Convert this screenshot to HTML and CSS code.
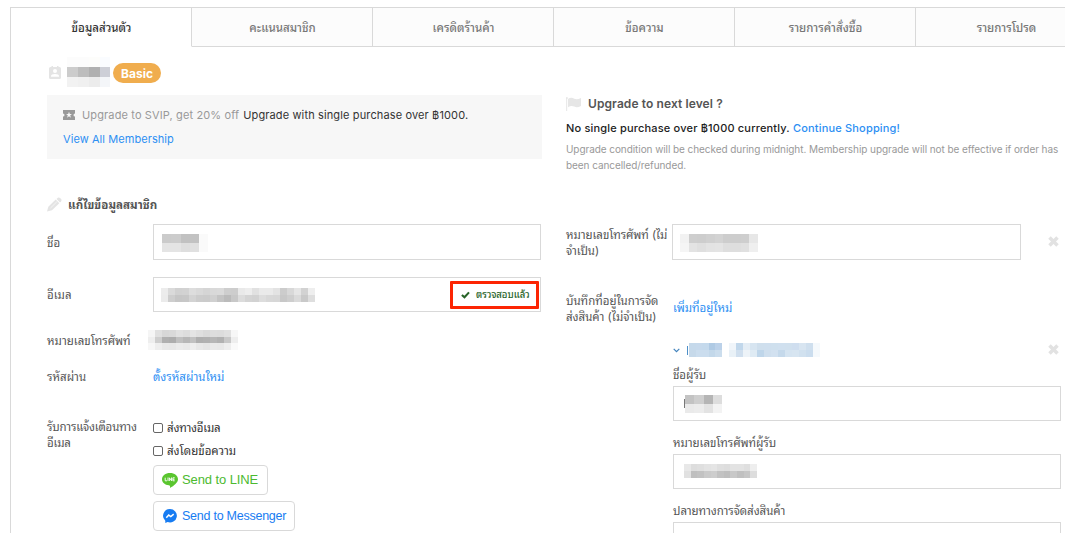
FILE: index.html
```html
<!DOCTYPE html>
<html lang="th">
<head>
<meta charset="utf-8">
<title>ข้อมูลส่วนตัว</title>
<link rel="stylesheet" href="styles.css">
</head>
<body>
<main class="account">
  <nav class="tabs">
    <a class="tab active"><span>ข้อมูลส่วนตัว</span></a>
    <a class="tab"><span>คะแนนสมาชิก</span></a>
    <a class="tab"><span>เครดิตร้านค้า</span></a>
    <a class="tab"><span>ข้อความ</span></a>
    <a class="tab"><span>รายการคำสั่งซื้อ</span></a>
    <a class="tab"><span>รายการโปรด</span></a>
  </nav>
  <div class="columns">
    <section class="left">
      <div class="profile">
        <svg class="user-icon" width="12" height="13" viewBox="0 0 12 13"><path fill="#e4e4e4" fill-rule="evenodd" d="M1.500 1H2.500V0H4V1H8V0H9.500V1H10.500Q12 1 12 2.500V11.500Q12 13 10.500 13H1.500Q0 13 0 11.500V2.500Q0 1 1.500 1ZM6 3A2 2 0 1 0 6 7A2 2 0 1 0 6 3ZM2 10.800H10V10Q10 8 6 8Q2 8 2 10Z"/></svg>
        <div class="mosaic" data-cell="11,10" data-rows="fcfcfc fcfcfc fdfdfb fafcff|cccccc bdbdbd b0b0b0 cdcfd7|f2f2f2 f0f0f0 ececec f4f6f9"></div>
        <span class="badge">Basic</span>
      </div>
      <div class="membership">
        <div class="offer">
          <svg width="12" height="10" viewBox="0 0 12 10"><path fill="#999" fill-rule="evenodd" d="M0 0H12V3.500A1.500 1.500 0 0 0 12 6.500V10H0V6.500A1.500 1.500 0 0 0 0 3.500ZM6 1.800L5.200 4H3L4.800 5.300L4.100 7.700L6 6.300L7.900 7.700L7.200 5.300L9 4H6.800Z"/></svg>
          <span class="muted">Upgrade to SVIP, get 20% off</span>
          <span class="need">Upgrade with single purchase over ฿1000.</span>
        </div>
        <a class="link view-all">View All Membership</a>
      </div>
      <h2 class="section-title">
        <svg width="15" height="15" viewBox="0 0 15 15"><g fill="#e4e4e4"><path d="M0 14.500L1.300 9.800L8.700 2.600L12.300 6.200L5 13.300Z"/><path d="M9.500 1.900L10.800.7Q12 0 13 .9L14.200 2.100Q15 3.200 14.200 4.200L13 5.500Z"/></g><path d="M3.500 11L9.800 4.800" stroke="#fff" stroke-width=".6"/></svg>
        <span>แก้ไขข้อมูลสมาชิก</span>
      </h2>
      <div class="row name-row">
        <label>ชื่อ</label>
        <div class="field"><div class="mosaic" data-cell="9.25,9" data-rows="cbcbcb cccccc c1c1c1 c2c2c2 fafafa|e4e4e4 e4e4e4 dedede e0e0e0 fafafa"></div></div>
      </div>
      <div class="row email-row">
        <label>อีเมล</label>
        <div class="field">
          <div class="mosaic" data-cell="7,7" data-rows="ececec dadada d1d1d1 d2d2d2 dddddd d9d9d9 d5d5d5 d9d9d9 dadada cecece cdcdcd e9e9e9 ededed e1e1e1 eaeaea eaeaea e3e3e3 cccccc d8d8d8 e5e5e5 d2d2d2 eeeeee|ebebeb cecece c6c6c6 c7c7c7 d3d3d3 cccccc cbcbcb d0d0d0 c4c4c4 bbbbbb c8c8c8 dcdcdc d4d4d4 d2d2d2 dddddd d8d8d8 d7d7d7 c8c8c8 cecece dadada c9c9c9 dedede"></div>
          <div class="verified">
            <svg width="9" height="8" viewBox="0 0 9 8"><path d="M.9 3.900L3.500 6.300L8 1.400" fill="none" stroke="#286428" stroke-width="2.100"/></svg>
            <span>ตรวจสอบแล้ว</span>
          </div>
        </div>
      </div>
      <div class="row phone-row">
        <label>หมายเลขโทรศัพท์</label>
        <div class="mosaic" data-cell="6.92,6.500" data-rows="f5f5f5 e0e0e0 d7d7d7 d9d9d9 e1e1e1 dddddd e4e4e4 dfdfdf dadada dddddd dcdcdc e0e0e0 f7f7f7|eeeeee cecece b0b0b0 adadad c0c0c0 b7b7b7 c1c1c1 afafaf b1b1b1 b6b6b6 b1b1b1 c8c8c8 eeeeee|f7f7f7 eeeeee e8e8e8 e7e7e7 ebebeb e9e9e9 eeeeee e8e8e8 e5e5e5 e9e9e9 e8e8e8 eeeeee fafafa"></div>
      </div>
      <div class="row password-row">
        <label>รหัสผ่าน</label>
        <a class="link">ตั้งรหัสผ่านใหม่</a>
      </div>
      <div class="row notify-row">
        <label class="tight">รับการแจ้งเตือนทาง<br>อีเมล</label>
        <div class="options">
          <div class="check"><i></i><span class="by-mail">ส่งทางอีเมล</span></div>
          <div class="check"><i></i><span>ส่งโดยข้อความ</span></div>
          <button class="send line">
            <svg width="16" height="15" viewBox="0 0 16 15"><path fill="#5ac52f" d="M8 0C12.500 0 16 2.700 16 6.200C16 9.500 12 12.600 8 15C8.300 13.500 8 12.500 6.800 12.300C2.800 11.800 0 9.500 0 6.200C0 2.700 3.500 0 8 0Z"/><path d="M3.200 4.700V7.800H5M6 4.500V8M7.400 8V4.800L9.500 7.800V4.500M12.700 4.800H10.900V7.800H12.700M10.900 6.300H12.500" fill="none" stroke="#fff" stroke-width=".9"/></svg>
            <span>Send to LINE</span>
          </button>
          <button class="send messenger">
            <svg width="14" height="14" viewBox="0 0 14 14"><path fill="#177cf2" d="M7 0A6.900 6.700 0 1 1 4.600 13L2.300 14V11.800A6.800 6.800 0 0 1 7 0Z"/><path d="M3.300 8.700L5.700 6.100L7.800 7.600L10.700 5.200" fill="none" stroke="#fff" stroke-width="1.500"/></svg>
            <span>Send to Messenger</span>
          </button>
        </div>
      </div>
    </section>
    <section class="right">
      <h2 class="next-title">
        <svg width="15" height="14" viewBox="0 0 15 14"><path d="M.7 1V14" stroke="#e6e6e6" stroke-width="1"/><circle cx=".9" cy="1" r=".9" fill="#e6e6e6"/><path fill="#e6e6e6" d="M2 2Q5-.2 8.300 1.800Q11 3 15 1V9Q11 11.200 8.300 9.600Q5 8.300 2 10.200Z"/></svg>
        <span>Upgrade to next level ?</span>
      </h2>
      <p class="status"><span>No single purchase over ฿1000 currently.</span> <a class="link">Continue Shopping!</a></p>
      <p class="note"><span>Upgrade condition will be checked during midnight. Membership upgrade will not be effective if order has</span><br><span>been cancelled/refunded.</span></p>
      <div class="row rphone-row">
        <label>หมายเลขโทรศัพท์ (ไม่<br>จำเป็น)</label>
        <div class="field"><div class="mosaic" data-cell="8.67,9" data-rows="f2f2f2 cecece cdcdcd d0d0d0 d3d3d3 cdcdcd cdcdcd cecece e7e7e7|f5f5f5 e3e3e3 dfdfdf e3e3e3 e4e4e4 dedede dedede e0e0e0 efefef"></div></div>
        <svg class="remove" width="11" height="11" viewBox="0 0 11 11"><path d="M1.500 1.500L9.500 9.500M9.500 1.500L1.500 9.500" stroke="#e2e2e2" stroke-width="3.500"/></svg>
      </div>
      <div class="row address-row">
        <label>บันทึกที่อยู่ในการจัด<br>ส่งสินค้า (ไม่จำเป็น)</label>
        <a class="link add">เพิ่มที่อยู่ใหม่</a>
      </div>
      <div class="address-form">
        <div class="address-head">
          <svg width="7" height="5" viewBox="0 0 7 5"><path d="M.7.8L3.500 3.700L6.300.8" fill="none" stroke="#4283bd" stroke-width="1.200"/></svg>
          <i class="stub"></i>
          <div class="mosaic" data-cell="6.62,7" data-rows="c5d9eb c6d9ec c4d9ec afcae4 bbd1e9|c6d9ea cbddee cbddee c3d8ea cbdded"></div>
          <div class="mosaic second" data-cell="7,7" data-rows="f0f5fa c1d7eb e4edf5 d7e5f1 cfdfed cfdfee cfe0ee d0e0ef d0e0ee cfdeef d8e5f1 cfdfee f5f9fc|e9f1f7 d0dfee edf3f8 dfebf4 bfd6ea cfdfee d2e1f0 c5d9eb d5e4f1 d7e5f1 d1e1ef cbddee f5f9fc"></div>
          <svg class="remove" width="11" height="11" viewBox="0 0 11 11"><path d="M1.500 1.500L9.500 9.500M9.500 1.500L1.500 9.500" stroke="#e2e2e2" stroke-width="3.500"/></svg>
        </div>
        <div class="item"><label>ชื่อผู้รับ</label><div class="field"><i class="stub dark"></i><div class="mosaic" data-cell="9.25,9" data-rows="c3c3c3 cecece b5b5b5 dddddd|eaeaea ececec e3e3e3 f3f3f3"></div></div></div>
        <div class="item"><label>หมายเลขโทรศัพท์ผู้รับ</label><div class="field"><div class="mosaic low" data-cell="6.640,7" data-rows="e8e8e8 dddddd dfdfdf e3e3e3 e5e5e5 dfdfdf dddddd e3e3e3 e3e3e3 dfdfdf eeeeee|e1e1e1 bfbfbf c2c2c2 cacaca cdcdcd c2c2c2 bebebe c8c8c8 c0c0c0 c6c6c6 dddddd"></div></div></div>
        <div class="item"><label>ปลายทางการจัดส่งสินค้า</label><div class="field"></div></div>
      </div>
    </section>
  </div>
</main>
<script src="mosaic.js"></script>
</body>
</html>
```

FILE: mosaic.js
```js
// Draws the blocks that cover private customer details.
document.querySelectorAll('.mosaic').forEach(function (box) {
  var size = box.dataset.cell.split(',').map(Number);
  var rows = box.dataset.rows.split('|').map(function (r) { return r.split(' '); });
  var ns = 'http://www.w3.org/2000/svg';
  var svg = document.createElementNS(ns, 'svg');
  svg.setAttribute('width', Math.round(size[0] * rows[0].length));
  svg.setAttribute('height', Math.round(size[1] * rows.length));
  svg.setAttribute('shape-rendering', 'crispEdges');
  rows.forEach(function (row, y) {
    row.forEach(function (color, x) {
      var r = document.createElementNS(ns, 'rect');
      var x0 = Math.round(x * size[0]), y0 = Math.round(y * size[1]);
      r.setAttribute('x', x0);
      r.setAttribute('y', y0);
      r.setAttribute('width', Math.round((x + 1) * size[0]) - x0);
      r.setAttribute('height', Math.round((y + 1) * size[1]) - y0);
      r.setAttribute('fill', '#' + color);
      svg.appendChild(r);
    });
  });
  box.appendChild(svg);
});
```

FILE: styles.css
```css
* { box-sizing: border-box; }
html, body { height: 533px; overflow: hidden; }
body { margin: 0; background: #fff; color: #555; font: 12px/16px Inter, Thonburi, "Noto Sans Thai Looped", Loma, Garuda, Waree, "Noto Sans Thai", "Noto Sans", sans-serif; }
h2, p { margin: 0; }
svg { display: block; flex: none; }
label, span, a { white-space: nowrap; }
.account { margin: 7px 0 0 10px; height: 526px; border-left: 1px solid #d9d9d9; overflow: hidden; }
.tabs { display: flex; width: 1086px; border-top: 1px solid #d9d9d9; }
.tab { flex: none; width: 181px; height: 39px; display: flex; align-items: center; justify-content: center; background: #fcfcfc; border-right: 1px solid #d9d9d9; border-bottom: 1px solid #d9d9d9; color: #777; font-size: 11.500px; font-weight: 500; }
.tab span { padding: 1px 0 0 1px; }
.tab.active { background: #fff; color: #333; border-bottom-color: #fff; }
.columns { display: grid; grid-template-columns: 495px 495px; column-gap: 24px; padding-left: 36px; }
.link { color: #2d8ff3; }
.row label, .row .link, .check span, .item label { font-size: 11.500px; }
.row label, .row .link { padding-top: 1px; }

.profile { display: flex; align-items: center; height: 30px; margin-top: 10px; padding-left: 2px; }
.user-icon { margin-right: 6px; }
.profile .mosaic { width: 43px; overflow: hidden; }
.badge { margin: 2px 0 0 3px; width: 48px; height: 20px; border-radius: 10px; background: #f0ad4e; color: #fff; font-weight: 700; font-size: 12px; line-height: 21px; text-align: center; }
.membership { margin-top: 8px; height: 64px; background: #f7f7f7; padding: 12px 16px; font-size: 11px; letter-spacing: .13px; }
.offer { display: flex; align-items: center; height: 16px; }
.muted { margin-left: 7px; color: #999; }
.need { margin-left: 4px; color: #333; }
.view-all { display: block; margin-top: 8px; letter-spacing: .07px; }
.section-title { display: flex; align-items: center; gap: 6px; height: 16px; margin-top: 37px; font-size: 11.600px; font-weight: 700; }
.section-title span { padding-top: 2px; }

.row { display: grid; grid-template-columns: 106px 1fr; align-items: center; }
.field { display: flex; align-items: center; border: 1px solid #d9d9d9; background: #fff; }
.name-row { margin-top: 12px; height: 36px; }
.name-row .field { width: 388px; height: 36px; padding: 2px 0 0 8px; }
.email-row { margin-top: 17px; height: 35px; }
.email-row .field { width: 388px; height: 35px; padding-left: 7px; position: relative; }
.verified { position: absolute; right: 1px; top: 3px; width: 89px; height: 28px; border: 3px solid #fc2503; border-radius: 1px; display: flex; align-items: center; gap: 6px; padding-left: 8px; color: #286428; font-size: 9.600px; font-weight: 500; letter-spacing: -.1px; }
.phone-row { margin-top: 18px; height: 20px; }
.phone-row .mosaic { margin-left: -5px; }
.password-row { margin-top: 19px; height: 16px; }
.row.password-row label, .row.password-row .link { padding-top: 0; }
.notify-row { margin-top: 34px; align-items: start; }
.row .tight { letter-spacing: -.18px; padding-top: 0; }
.options { display: flex; flex-direction: column; align-items: flex-start; }
.check { display: flex; align-items: center; gap: 4px; height: 16px; margin-bottom: 7px; color: #333; }
.check i { width: 10px; height: 10px; border: 1px solid #666; border-radius: 2px; margin-top: 1px; }
.check span { padding-top: 1px; }
.by-mail { letter-spacing: -.2px; }
.send { display: flex; align-items: center; height: 30px; margin: 0 0 6px; padding: 0 8px 0 9px; border: 1px solid #d9d9d9; border-radius: 4px; background: #fff; font: 13px/16px "Liberation Sans", Arial, sans-serif; }
.line { width: 115px; gap: 4px; padding-left: 8px; color: #4cba2f; letter-spacing: -.1px; }
.messenger { width: 142px; gap: 5px; color: #177cf2; font-size: 12.500px; letter-spacing: -.25px; }

.next-title { display: flex; align-items: center; gap: 7px; height: 16px; margin-top: 49px; font-size: 12px; font-weight: 600; letter-spacing: .1px; }
.status { margin-top: 8px; height: 16px; color: #222; font-size: 11px; font-weight: 500; letter-spacing: .18px; white-space: nowrap; }
.note { margin-top: 5px; color: #999; font-size: 10px; letter-spacing: -.07px; }
.rphone-row { margin-top: 51px; height: 36px; grid-template-columns: 106px 349px 1fr; }
.rphone-row label { letter-spacing: -.06px; }
.rphone-row .field { height: 36px; padding: 2px 0 0 7px; }
.remove { margin: 0 0 2px 27px; }
.address-row { margin-top: 33px; height: 32px; }
.row.address-row label { padding-top: 0; }
.row .add { padding: 0 0 2px 1px; }
.address-form { margin-left: 107px; width: 388px; }
.address-head { display: flex; align-items: center; height: 16px; margin-top: 17px; }
.address-head .remove { margin: 0 2px 1px auto; }
.stub { flex: none; width: 1px; height: 9px; margin-left: 7px; background: #4d8fc8; }
.stub.dark { background: #777; margin-left: 10px; }
.stub + .mosaic { margin-left: 1px; }
.field .stub + .mosaic { margin-left: 0; }
.address-head .second { margin-left: 7px; }
.item { margin-top: 9px; }
.item + .item { margin-top: 14px; }
.item label { display: block; height: 16px; letter-spacing: -.05px; }
.item .field { height: 35px; margin-top: 3px; }
.item .low { margin: -2px 0 0 10px; }
```
